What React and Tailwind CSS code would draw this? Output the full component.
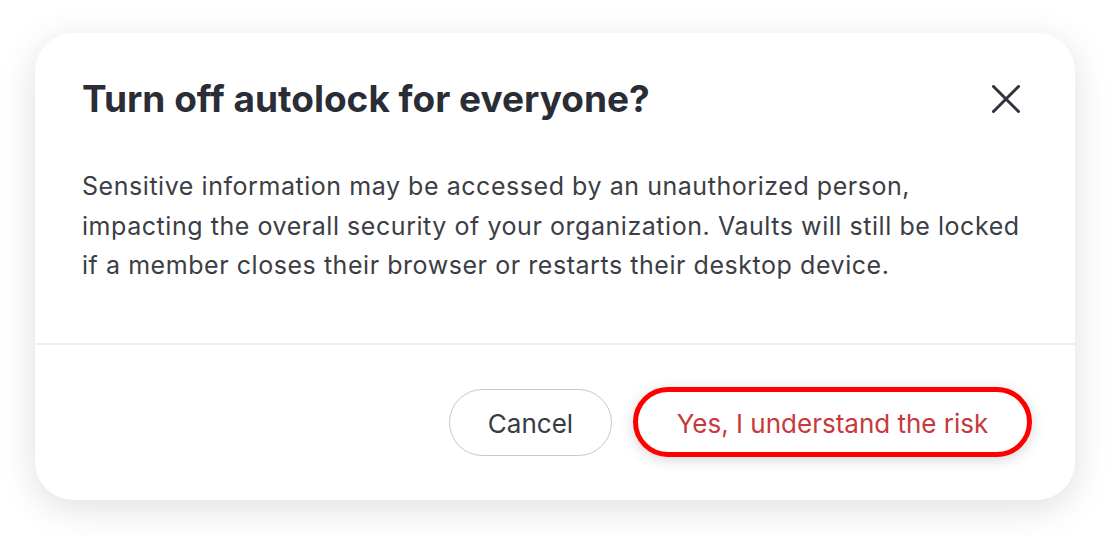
export default function App() {
    return (
        <div className="w-[1110px] h-[536px] bg-white overflow-hidden" style={{ fontFamily: "Inter, 'Noto Sans', sans-serif" }}>
            {/* 카드 */}
            <div className="ml-[35px] mt-[33px] w-[1040px] h-[467px] bg-white rounded-[38px] shadow-[0_8px_36px_rgba(0,0,0,0.13)] flex flex-col">
                {/* 헤더 */}
                <div className="flex items-center justify-between pl-[47px] pr-[55px] pt-[44px]">
                    <h1 className="text-[37px] leading-[44px] font-bold text-[#2a2d36]">
                        Turn off autolock for everyone?
                    </h1>
                    <button className="w-[28px] h-[28px] flex items-center justify-center text-[#30333b]">
                        <svg width="28" height="28" viewBox="0 0 28 28" fill="none" stroke="currentColor" strokeWidth="3" strokeLinecap="round">
                            <path d="M1.5 1.5L26.5 26.5" />
                            <path d="M26.5 1.5L1.5 26.5" />
                        </svg>
                    </button>
                </div>

                {/* 본문 */}
                <p className="pl-[47px] pr-[10px] pt-[46px] pb-[57px] text-[25px] leading-[39.5px] tracking-[0.55px] text-[#3b3e45] whitespace-nowrap">
                    Sensitive information may be accessed by an unauthorized person,<br />
                    impacting the overall security of your organization. Vaults will still be locked<br />
                    if a member closes their browser or restarts their desktop device.
                </p>

                <div className="h-[2px] bg-[#efefef]" />

                {/* 버튼 */}
                <div className="flex-1 flex items-center justify-end gap-[21px] pr-[43px]">
                    <button className="w-[163px] h-[67px] pt-[3px] rounded-full border border-[#c5c7cb] bg-white text-[26px] text-[#383b42]">
                        Cancel
                    </button>
                    <button className="w-[399px] h-[70px] pt-[3px] rounded-full border-[5px] border-[#ff0000] bg-white text-[26px] text-[#c7393b] shadow-[0_3px_14px_rgba(0,0,0,0.16)]">
                        Yes, I understand the risk
                    </button>
                </div>
            </div>
        </div>
    );
}
